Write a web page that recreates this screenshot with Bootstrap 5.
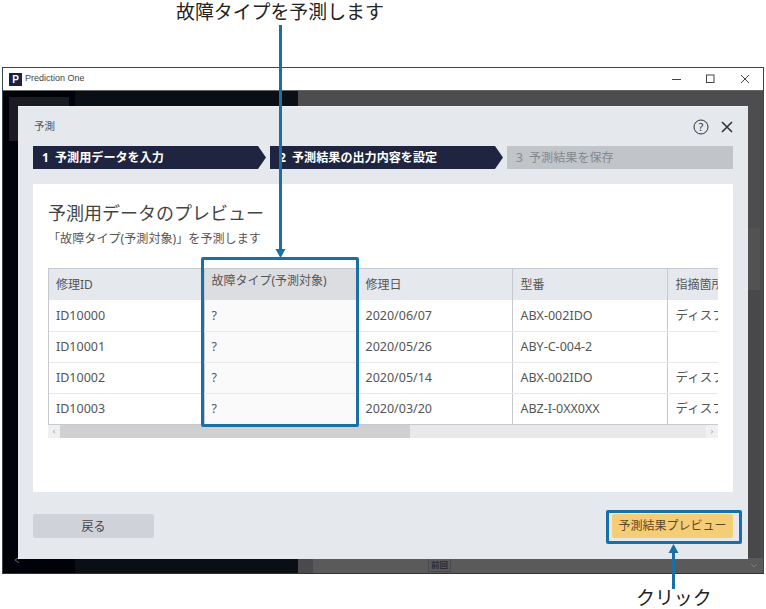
<!DOCTYPE html>
<html lang="ja">

<head>
    <meta charset="UTF-8">
    <title>Prediction One</title>
    <link href="https://cdn.jsdelivr.net/npm/bootstrap@5.3.0/dist/css/bootstrap.min.css" rel="stylesheet">
    <style>
        html, body {
            margin: 0;
            background: #fff;
            overflow: hidden;
        }

        body {
            font-family: "Noto Sans", "Noto Sans CJK JP", sans-serif;
            color: #555;
        }

        .shot {
            position: relative;
            width: 766px;
            height: 609px;
        }

        .caption {
            font-size: 18.9px;
            color: #222;
            line-height: 1.3;
        }

        .caption-top {
            height: 67px;
            padding-left: 176px;
        }

        .caption-bottom {
            padding: 12px 0 0 636px;
        }

        .app-window {
            margin-left: 2px;
            width: 762px;
            height: 507px;
            border: 1px solid #3c4650;
            border-bottom-color: #2a3340;
            display: flex;
            flex-direction: column;
        }

        .title-bar {
            height: 23px;
            flex: none;
            padding: 0 13px 0 6px;
            font-family: "Liberation Sans", sans-serif;
            font-size: 9px;
            color: #444;
            border-bottom: 1px solid #666;
        }

        .app-logo {
            width: 13px;
            height: 13px;
            margin-right: 3px;
            background: #1b2140;
            color: #fff;
            font: bold 10px/13px "Liberation Sans", sans-serif;
            text-align: center;
        }

        .win-body {
            position: relative;
            flex: 1;
            padding: 15px 15px 14px;
            background:
                linear-gradient(#1a1c21, #1a1c21) 6px 6px / 60px 44px no-repeat,
                linear-gradient(90deg, #000209 72px, #0a0e15 72px, #0a0e15 295px, #4d4d4f 295px);
        }

        .strip-right {
            position: absolute;
            left: 295px;
            right: 0;
            bottom: 0;
            height: 15px;
            background: linear-gradient(90deg, #4a4a4c 15px, #5a5a5a 15px);
        }

        .strip-chip {
            position: absolute;
            left: 425px;
            bottom: 1px;
            width: 23px;
            height: 14px;
            border: 1px solid #44485a;
            font-size: 8.5px;
            line-height: 12px;
            text-align: center;
            font-weight: 700;
            color: #2b2d3a;
        }

        .side-scroll {
            position: absolute;
            right: 3px;
            top: 137px;
            width: 12px;
            bottom: 15px;
            background: linear-gradient(#525253 62px, #48484a 62px);
        }

        .edge-chevron {
            position: absolute;
        }

        .chevron-left {
            left: 11px;
            bottom: 9px;
        }

        .chevron-right {
            right: 5px;
            bottom: 5px;
        }

        .dialog {
            position: relative;
            height: 453px;
            padding: 0 15px;
            background: #e5e8ed;
            border-top: 1px solid #f0f1f3;
        }

        .dialog-head {
            height: 39px;
            font-size: 10.5px;
            padding-left: 1px;
        }

        .step {
            height: 23px;
            width: 233px;
            padding-left: 9px;
            font-size: 12.1px;
            font-weight: 700;
            line-height: 24px;
            color: #fff;
            background: #1f2540;
            clip-path: polygon(0 0, 225px 0, 100% 50%, 225px 100%, 0 100%);
        }

        .step-off {
            width: 226px;
            font-weight: 400;
            color: #85888d;
            background: #c1c4c9;
            clip-path: none;
        }

        .step-num {
            display: inline-block;
            width: 13px;
        }

        .panel {
            height: 308px;
            margin-top: 15px;
            padding: 17px 15px 0;
            background: #fff;
        }

        .panel-title {
            margin: 0;
            font-size: 18px;
            font-weight: 400;
            line-height: 24px;
            color: #444;
        }

        .panel-sub {
            margin: 6px 0 0;
            font-size: 12.1px;
            line-height: 16px;
            color: #555;
        }

        .table-wrap {
            width: 670px;
            margin-top: 21px;
            overflow: hidden;
            border-top: 1px solid #c6c9cf;
            border-left: 1px solid #c6c9cf;
            border-bottom: 1px solid #c6c9cf;
        }

        .data-table {
            width: 774px;
            max-width: none;
            margin: 0;
            table-layout: fixed;
            font-size: 12.5px;
            color: #555;
        }

        .data-table th,
        .data-table td {
            height: 31px;
            padding: 2px 0 0 7px;
            vertical-align: middle;
            white-space: nowrap;
            overflow: hidden;
            font-weight: 400;
            color: #555;
            box-shadow: none;
            background: transparent;
            border-bottom: 1px solid #e6e8ec;
            border-right: 1px solid #c6c9cf;
        }

        .data-table tr > :nth-child(n+4) {
            padding-left: 8px;
        }

        .data-table tbody tr:last-child td {
            border-bottom: 0;
        }

        .data-table th {
            padding-top: 1px;
            font-size: 12px;
            background: #e5e8ed;
            border-bottom: 0;
            border-right-color: #c6c9cf;
        }

        .data-table th.target-col {
            background: #dcdde1;
            vertical-align: top;
            padding-top: 3px;
        }

        .data-table td.target-col {
            background: #fafafa;
        }

        .h-scroll {
            width: 670px;
            height: 13px;
            background: #e9e9e9;
            font-size: 8px;
            line-height: 12px;
            color: #999;
        }

        .h-scroll-btn {
            width: 12px;
            background: #f0f0f0;
            text-align: center;
        }

        .h-scroll-thumb {
            width: 350px;
            background: #d0d0d0;
        }

        .dialog-foot {
            margin-top: 22px;
        }

        .foot-btn {
            width: 121px;
            height: 24px;
            padding: 1px 0 0;
            border: 0;
            border-radius: 2px;
            font-size: 12px;
            color: #444;
            background: #cfd2d9;
        }

        .foot-btn.is-primary {
            padding-top: 0;
            background: #f5cd75;
            color: #5a4a2c;
        }

        .callout {
            position: absolute;
            border: 3px solid #1a6fa5;
            border-radius: 2px;
        }

        .callout-column {
            left: 201px;
            top: 257px;
            width: 158px;
            height: 170px;
        }

        .callout-button {
            left: 606px;
            top: 510px;
            width: 136px;
            height: 34px;
        }

        .arrows {
            position: absolute;
            left: 0;
            top: 0;
            pointer-events: none;
        }
    </style>
</head>

<body>
    <div class="shot">
        <div class="caption caption-top">故障タイプを予測します</div>

        <div class="app-window">
            <div class="title-bar d-flex align-items-center bg-white">
                <div class="app-logo">P</div>
                <span>Prediction One</span>
                <svg class="ms-auto" width="78" height="10" viewBox="0 0 78 10" fill="none" stroke="#444" stroke-width="1">
                    <path d="M0 5.5h9" />
                    <rect x="34.5" y="1" width="7.5" height="7.5" />
                    <path d="M69 1l8 8M77 1l-8 8" />
                </svg>
            </div>

            <div class="win-body">
                <div class="strip-right"></div>
                <div class="strip-chip">前回</div>
                <div class="side-scroll"></div>
                <svg class="edge-chevron chevron-left" width="6" height="8" viewBox="0 0 6 8" fill="none" stroke="#666">
                    <path d="M5 1L1 4l4 3" />
                </svg>
                <svg class="edge-chevron chevron-right" width="8" height="5" viewBox="0 0 8 5" fill="none" stroke="#7a7a7a">
                    <path d="M1 1l3 3 3-3" />
                </svg>

                <div class="dialog">
                    <div class="dialog-head d-flex align-items-center justify-content-between">
                        <span>予測</span>
                        <svg width="40" height="16" viewBox="0 0 40 16" fill="none" stroke="#333">
                            <circle cx="8" cy="8" r="7" />
                            <text x="8" y="12" font-size="11" text-anchor="middle" fill="#333" stroke="none">?</text>
                            <path d="M29 3l10 10M39 3L29 13" stroke-width="1.6" />
                        </svg>
                    </div>

                    <div class="d-flex gap-1">
                        <div class="step"><span class="step-num">1</span>予測用データを入力</div>
                        <div class="step"><span class="step-num">2</span>予測結果の出力内容を設定</div>
                        <div class="step step-off"><span class="step-num">3</span>予測結果を保存</div>
                    </div>

                    <div class="panel">
                        <h2 class="panel-title">予測用データのプレビュー</h2>
                        <p class="panel-sub">「故障タイプ(予測対象)」を予測します</p>

                        <div class="table-wrap">
                            <table class="table data-table">
                                <colgroup>
                                    <col style="width: 155px">
                                    <col style="width: 154px">
                                    <col style="width: 154px">
                                    <col style="width: 155px">
                                    <col style="width: 156px">
                                </colgroup>
                                <thead>
                                    <tr>
                                        <th>修理ID</th>
                                        <th class="target-col">故障タイプ(予測対象)</th>
                                        <th>修理日</th>
                                        <th>型番</th>
                                        <th>指摘箇所</th>
                                    </tr>
                                </thead>
                                <tbody>
                                    <tr>
                                        <td>ID10000</td>
                                        <td class="target-col">?</td>
                                        <td>2020/06/07</td>
                                        <td>ABX-002IDO</td>
                                        <td>ディスプレイ</td>
                                    </tr>
                                    <tr>
                                        <td>ID10001</td>
                                        <td class="target-col">?</td>
                                        <td>2020/05/26</td>
                                        <td>ABY-C-004-2</td>
                                        <td></td>
                                    </tr>
                                    <tr>
                                        <td>ID10002</td>
                                        <td class="target-col">?</td>
                                        <td>2020/05/14</td>
                                        <td>ABX-002IDO</td>
                                        <td>ディスプレイ</td>
                                    </tr>
                                    <tr>
                                        <td>ID10003</td>
                                        <td class="target-col">?</td>
                                        <td>2020/03/20</td>
                                        <td>ABZ-I-0XX0XX</td>
                                        <td>ディスプレイ</td>
                                    </tr>
                                </tbody>
                            </table>
                        </div>

                        <div class="h-scroll d-flex">
                            <div class="h-scroll-btn">‹</div>
                            <div class="h-scroll-thumb"></div>
                            <div class="h-scroll-btn ms-auto">›</div>
                        </div>
                    </div>

                    <div class="dialog-foot d-flex justify-content-between">
                        <button type="button" class="btn foot-btn">戻る</button>
                        <button type="button" class="btn foot-btn is-primary">予測結果プレビュー</button>
                    </div>
                </div>
            </div>
        </div>

        <div class="caption caption-bottom">クリック</div>

        <div class="callout callout-column"></div>
        <div class="callout callout-button"></div>
        <svg class="arrows" width="766" height="609" viewBox="0 0 766 609" fill="#1a6fa5" stroke="none">
            <rect x="279" y="25" width="3" height="227" />
            <path d="M275.5 249h10l-5 9z" />
            <rect x="672" y="552" width="3" height="37" />
            <path d="M668.5 553h10l-5-9z" />
        </svg>
    </div>

    <script src="https://cdn.jsdelivr.net/npm/bootstrap@5.3.0/dist/js/bootstrap.bundle.min.js"></script>
</body>

</html>
